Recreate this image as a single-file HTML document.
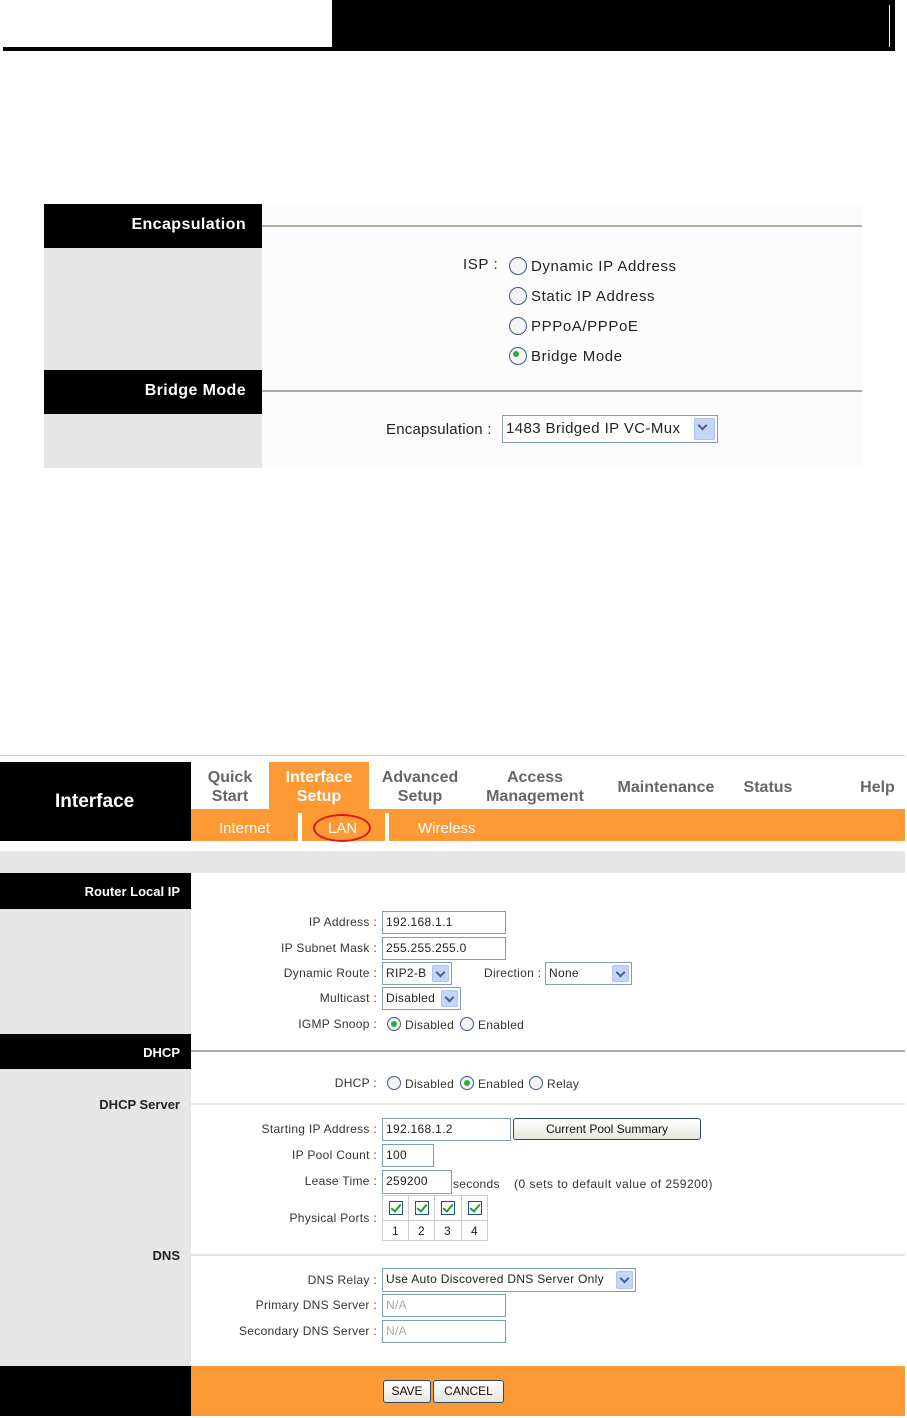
<!DOCTYPE html>
<html><head><meta charset="utf-8"><style>
*{margin:0;padding:0;box-sizing:border-box}
body{width:907px;height:1418px;position:relative;background:#fff;font-family:"Liberation Sans",sans-serif;overflow:hidden}
div,span{position:absolute}
.t{white-space:nowrap}
.b{background:#000}
.g{background:#e6e6e6}
.o{background:#fe9a36}
.hl{color:#fff;font-weight:bold;text-align:right}
.lb{font-size:12px;color:#333;text-align:right;white-space:nowrap;width:300px;letter-spacing:0.3px}
.in{border:1px solid #7f9db9;background:#fff;font-size:12px;color:#222;padding:2px 3px;line-height:16px;white-space:nowrap;letter-spacing:0.3px}
.ar{width:17px;top:2px;bottom:2px;right:2px;background:#c4d5fb;border:1px solid #b0c4ee;border-radius:2px}
.ar:after{content:"";position:absolute;left:4px;top:3px;width:5px;height:5px;border-right:2px solid #4d6185;border-bottom:2px solid #4d6185;transform:rotate(45deg)}
.rd{width:14px;height:14px;border:1px solid #3d5a80;border-radius:50%;background:#f4f4f4}
.rd.on:after{content:"";position:absolute;left:3px;top:3px;width:6px;height:6px;border-radius:50%;background:#2eaa3c}
.tab{font-family:"Liberation Sans Narrow","Liberation Sans",sans-serif;font-weight:bold;font-size:16px;color:#666;text-align:center;line-height:19px;white-space:nowrap}
.sub{font-family:"Liberation Sans Narrow","Liberation Sans",sans-serif;font-size:15px;color:#fff;white-space:nowrap}
.btn{border:1px solid #2b4a6e;border-radius:3px;background:linear-gradient(#fff,#e8e6dc);font-size:12px;text-align:center;color:#111;line-height:20px}
.ck{width:14px;height:14px;border:1px solid #1c5180;background:#fff}
.ck:after{content:"";position:absolute;left:3px;top:0px;width:4px;height:8px;border-right:2px solid #21a121;border-bottom:2px solid #21a121;transform:rotate(40deg)}
.s1{font-size:15px;color:#222;letter-spacing:0.6px}
.s2{font-size:12px;color:#333;letter-spacing:0.3px}
</style></head><body>

<div class="b" style="left:332px;top:0;width:563px;height:48px"></div>
<div style="left:889px;top:5px;width:1px;height:43px;background:#fff"></div>
<div class="b" style="left:3px;top:47px;width:892px;height:4px"></div>

<div style="left:262px;top:204px;width:600px;height:264px;background:#fcfcfc"></div>
<div class="b" style="left:44px;top:204px;width:218px;height:44px"></div>
<div class="t hl" style="left:44px;top:216px;width:202px;font-size:16px;letter-spacing:0.4px">Encapsulation</div>
<div class="g" style="left:44px;top:248px;width:218px;height:122px"></div>
<div class="b" style="left:44px;top:370px;width:218px;height:44px"></div>
<div class="t hl" style="left:44px;top:382px;width:202px;font-size:16px;letter-spacing:0.4px">Bridge Mode</div>
<div class="g" style="left:44px;top:414px;width:218px;height:54px"></div>
<div style="left:262px;top:225px;width:600px;height:2px;background:#b0aca0"></div>
<div style="left:262px;top:390px;width:600px;height:2px;background:#b0aca0"></div>

<div class="t s1" style="left:463px;top:256px">ISP :</div>
<div class="rd" style="left:509px;top:257px;width:18px;height:18px"></div>
<div class="t s1" style="left:531px;top:258px">Dynamic IP Address</div>
<div class="rd" style="left:509px;top:287px;width:18px;height:18px"></div>
<div class="t s1" style="left:531px;top:288px">Static IP Address</div>
<div class="rd" style="left:509px;top:317px;width:18px;height:18px"></div>
<div class="t s1" style="left:531px;top:318px">PPPoA/PPPoE</div>
<div class="rd on" style="left:509px;top:347px;width:18px;height:18px"></div>
<div class="t s1" style="left:531px;top:348px">Bridge Mode</div>
<div class="t s1" style="left:386px;top:421px;letter-spacing:0.2px">Encapsulation :</div>
<div class="in" style="left:502px;top:415px;width:216px;height:28px;font-size:15px;line-height:22px;letter-spacing:0.4px">1483 Bridged IP VC-Mux<div class="ar" style="width:21px"></div></div>

<div style="left:0;top:755px;width:905px;height:1px;background:#ccc"></div>
<div class="b" style="left:0;top:762px;width:191px;height:79px"></div>
<div class="t" style="left:55px;top:791px;font-size:19px;font-weight:bold;color:#fff;font-family:'Liberation Sans Narrow','Liberation Sans',sans-serif">Interface</div>
<div class="o" style="left:269px;top:762px;width:100px;height:47px"></div>
<div class="tab" style="left:190px;top:768px;width:80px">Quick<br>Start</div>
<div class="tab" style="left:269px;top:768px;width:100px;color:#fff">Interface<br>Setup</div>
<div class="tab" style="left:370px;top:768px;width:100px">Advanced<br>Setup</div>
<div class="tab" style="left:475px;top:768px;width:120px">Access<br>Management</div>
<div class="tab" style="left:610px;top:778px;width:112px">Maintenance</div>
<div class="tab" style="left:738px;top:778px;width:60px">Status</div>
<div class="tab" style="left:850px;top:778px;width:55px">Help</div>
<div class="o" style="left:191px;top:809px;width:714px;height:32px"></div>
<div class="sub" style="left:219px;top:820px">Internet</div>
<div style="left:298px;top:813px;width:4px;height:28px;background:#fff"></div>
<div style="left:385px;top:813px;width:4px;height:28px;background:#fff"></div>
<div class="sub" style="left:328px;top:820px">LAN</div>
<div style="left:313px;top:814px;width:58px;height:28px;border:2px solid #e0141e;border-radius:50%"></div>
<div class="sub" style="left:418px;top:820px">Wireless</div>

<div class="g" style="left:0;top:851px;width:905px;height:22px"></div>
<div class="b" style="left:0;top:873px;width:191px;height:36px"></div>
<div class="t hl" style="left:0;top:884px;width:180px;font-size:13px">Router Local IP</div>
<div class="g" style="left:0;top:909px;width:191px;height:125px"></div>
<div class="b" style="left:0;top:1034px;width:191px;height:35px"></div>
<div class="t hl" style="left:0;top:1045px;width:180px;font-size:13px">DHCP</div>
<div class="g" style="left:0;top:1069px;width:191px;height:297px"></div>
<div style="left:191px;top:1050px;width:714px;height:2px;background:#b0aca0"></div>
<div style="left:191px;top:1103px;width:714px;height:2px;background:#e6e6e6"></div>
<div style="left:191px;top:1254px;width:714px;height:2px;background:#e6e6e6"></div>
<div class="t" style="left:0;top:1097px;width:180px;text-align:right;font-size:13px;font-weight:bold;color:#222">DHCP Server</div>
<div class="t" style="left:0;top:1248px;width:180px;text-align:right;font-size:13px;font-weight:bold;color:#222">DNS</div>

<div class="lb" style="left:77px;top:915px">IP Address :</div>
<div class="in" style="left:382px;top:911px;width:124px;height:23px">192.168.1.1</div>
<div class="lb" style="left:77px;top:941px">IP Subnet Mask :</div>
<div class="in" style="left:382px;top:937px;width:124px;height:23px">255.255.255.0</div>
<div class="lb" style="left:77px;top:966px">Dynamic Route :</div>
<div class="in" style="left:382px;top:962px;width:70px;height:23px">RIP2-B<div class="ar"></div></div>
<div class="t s2" style="left:484px;top:966px">Direction :</div>
<div class="in" style="left:545px;top:962px;width:87px;height:23px">None<div class="ar"></div></div>
<div class="lb" style="left:77px;top:991px">Multicast :</div>
<div class="in" style="left:382px;top:987px;width:79px;height:23px">Disabled<div class="ar"></div></div>
<div class="lb" style="left:77px;top:1017px">IGMP Snoop :</div>
<div class="rd on" style="left:387px;top:1017px"></div>
<div class="t s2" style="left:405px;top:1018px">Disabled</div>
<div class="rd" style="left:460px;top:1017px"></div>
<div class="t s2" style="left:478px;top:1018px">Enabled</div>

<div class="lb" style="left:77px;top:1076px">DHCP :</div>
<div class="rd" style="left:387px;top:1076px"></div>
<div class="t s2" style="left:405px;top:1077px">Disabled</div>
<div class="rd on" style="left:460px;top:1076px"></div>
<div class="t s2" style="left:478px;top:1077px">Enabled</div>
<div class="rd" style="left:529px;top:1076px"></div>
<div class="t s2" style="left:547px;top:1077px">Relay</div>

<div class="lb" style="left:77px;top:1122px">Starting IP Address :</div>
<div class="in" style="left:382px;top:1118px;width:129px;height:23px">192.168.1.2</div>
<div class="btn" style="left:513px;top:1118px;width:188px;height:22px">Current Pool Summary</div>
<div class="lb" style="left:77px;top:1148px">IP Pool Count :</div>
<div class="in" style="left:382px;top:1144px;width:52px;height:23px">100</div>
<div class="lb" style="left:77px;top:1174px">Lease Time :</div>
<div class="in" style="left:382px;top:1170px;width:70px;height:24px">259200</div>
<div class="t s2" style="left:453px;top:1177px">seconds</div>
<div class="t s2" style="left:514px;top:1177px;letter-spacing:0.5px">(0 sets to default value of 259200)</div>
<div class="lb" style="left:77px;top:1211px">Physical Ports :</div>
<div style="left:382px;top:1195px;width:106px;height:46px;border:1px solid #ccc;background:#fff"></div>
<div style="left:382px;top:1220px;width:106px;height:1px;background:#ccc"></div>
<div style="left:408px;top:1195px;width:1px;height:46px;background:#ccc"></div>
<div style="left:434px;top:1195px;width:1px;height:46px;background:#ccc"></div>
<div style="left:461px;top:1195px;width:1px;height:46px;background:#ccc"></div>
<div class="ck" style="left:389px;top:1201px"></div>
<div class="ck" style="left:415px;top:1201px"></div>
<div class="ck" style="left:441px;top:1201px"></div>
<div class="ck" style="left:468px;top:1201px"></div>
<div class="t" style="left:392px;top:1224px;font-size:12px;color:#222">1</div>
<div class="t" style="left:418px;top:1224px;font-size:12px;color:#222">2</div>
<div class="t" style="left:444px;top:1224px;font-size:12px;color:#222">3</div>
<div class="t" style="left:471px;top:1224px;font-size:12px;color:#222">4</div>

<div class="lb" style="left:77px;top:1273px">DNS Relay :</div>
<div class="in" style="left:382px;top:1268px;width:254px;height:24px">Use Auto Discovered DNS Server Only<div class="ar"></div></div>
<div class="lb" style="left:77px;top:1298px">Primary DNS Server :</div>
<div class="in" style="left:382px;top:1294px;width:124px;height:23px;color:#aaa">N/A</div>
<div class="lb" style="left:77px;top:1324px">Secondary DNS Server :</div>
<div class="in" style="left:382px;top:1320px;width:124px;height:23px;color:#aaa">N/A</div>

<div class="b" style="left:0;top:1366px;width:191px;height:50px"></div>
<div class="o" style="left:191px;top:1366px;width:714px;height:50px"></div>
<div class="btn" style="left:383px;top:1380px;width:48px;height:23px">SAVE</div>
<div class="btn" style="left:433px;top:1380px;width:71px;height:23px">CANCEL</div>
</body></html>
